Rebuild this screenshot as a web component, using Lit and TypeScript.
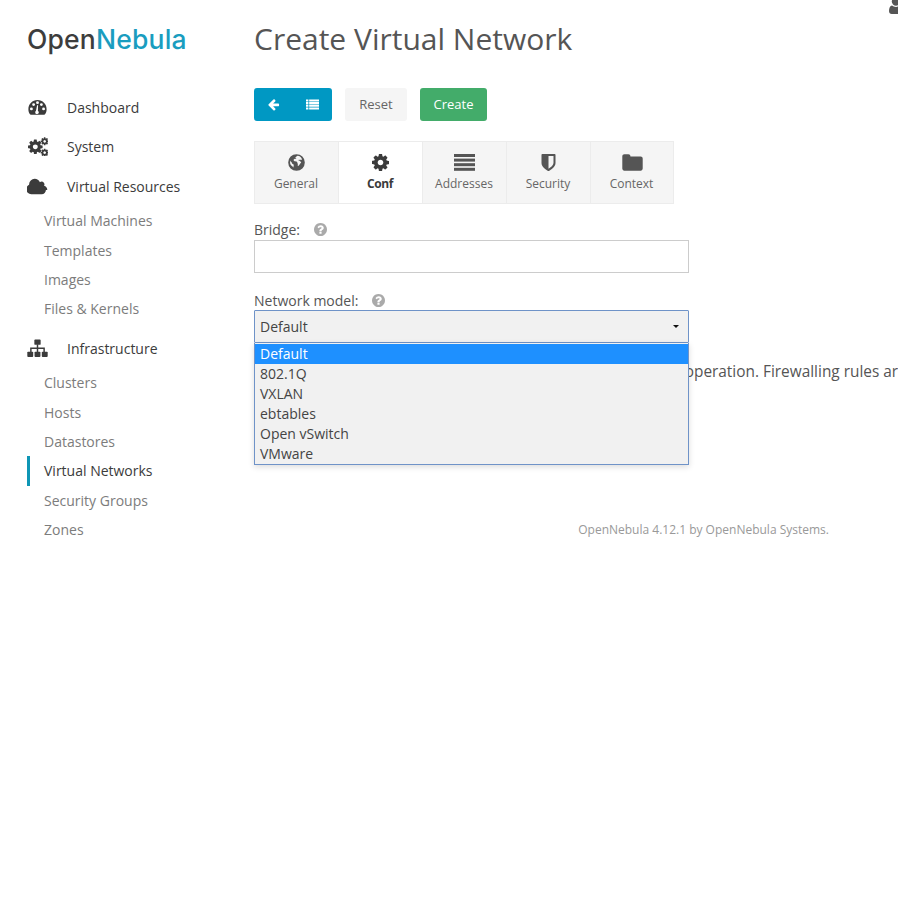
import { LitElement, html, css, svg } from "lit";
import { customElement } from "lit/decorators.js";

const COG = "M1152 896q0-106-75-181t-181-75-181 75-75 181 75 181 181 75 181-75 75-181zm512-109v222q0 12-8 23t-20 13l-185 28q-19 54-39 91 35 50 107 138 10 12 10 25t-9 23q-27 37-99 108t-94 71q-12 0-26-9l-138-108q-44 23-91 38-16 136-29 186-7 28-36 28h-222q-14 0-24.5-8.5t-11.5-21.5l-28-184q-49-16-90-37l-141 107q-10 9-25 9-14 0-25-11-126-114-165-168-7-10-7-23 0-12 8-23 15-21 51-66.5t54-70.5q-27-50-41-99l-183-27q-13-2-21-12.5t-8-23.5v-222q0-12 8-23t19-13l186-28q14-46 39-92-40-57-107-138-10-12-10-24 0-10 9-23 26-36 98.5-107.5t94.5-71.5q13 0 26 10l138 107q44-23 91-38 16-136 29-186 7-28 36-28h222q14 0 24.5 8.5t11.5 21.5l28 184q49 16 90 37l142-107q9-9 24-9 13 0 25 10 129 119 165 170 7 8 7 22 0 12-8 23-15 21-51 66.5t-54 70.5q26 50 41 98l183 28q13 2 21 12.5t8 23.5z";
const CLOUD = "M1728 1216q0 159-112.5 271.5t-271.5 112.5h-960q-185 0-316.5-131.5t-131.5-316.5q0-132 71-241.5t187-163.5q-2-28-2-43 0-212 150-362t362-150q158 0 286.5 88t187.5 230q70-62 166-62 106 0 181 75t75 181q0 75-41 138 129 30 213 134.5t84 239.5z";
const ARROW = "M1664 896v128q0 53-32.5 90.5t-84.5 37.5h-704l293 294q38 36 38 90t-38 90l-75 76q-37 37-90 37-52 0-91-37l-651-652q-37-37-37-90 0-52 37-91l651-650q38-38 91-38 52 0 90 38l75 74q38 38 38 91t-38 91l-293 293h704q52 0 84.5 37.5t32.5 90.5z";
const HELP = "M1024 1376v-192q0-14-9-23t-23-9h-192q-14 0-23 9t-9 23v192q0 14 9 23t23 9h192q14 0 23-9t9-23zm256-672q0-88-55.5-163t-138.5-116-170-41q-243 0-371 213-15 24 8 42l132 100q7 6 19 6 16 0 25-12 53-68 86-92 34-24 86-24 48 0 85.5 26t37.5 59q0 38-20 61t-68 45q-63 28-115.5 86.5t-52.5 125.5v36q0 14 9 23t23 9h192q14 0 23-9t9-23q0-19 21.5-49.5t54.5-49.5q32-18 49-28.5t46-35 44.5-48 28-60.5 12.5-81zm384 192q0 209-103 385.5t-279.5 279.5-385.5 103-385.5-103-279.5-279.5-103-385.5 103-385.5 279.5-279.5 385.5-103 385.5 103 279.5 279.5 103 385.5z";

const icons: Record<string, { box: string; body: unknown }> = {
  dashboard: {
    box: "0 0 20 20",
    body: svg`<path fill-rule="evenodd" d="M10 2.2C4.6 2.2.4 6.5.4 11.8c0 2 .6 3.9 1.7 5.4.2.3.5.4.8.4h14.2c.3 0 .6-.1.8-.4 1.1-1.5 1.7-3.4 1.7-5.4 0-5.3-4.2-9.6-9.6-9.6zM3.6 13a1.5 1.5 0 110-3 1.5 1.5 0 010 3zm2.3-4.6a1.5 1.5 0 110-3 1.5 1.5 0 010 3zM10 6.4a1.5 1.5 0 110-3 1.5 1.5 0 010 3zm1.4 8.6a1.9 1.9 0 11-3-1.5l1.2-6 1 .1-.2 6.1c.6.3 1 .8 1 1.3zm2.7-6.6a1.5 1.5 0 110-3 1.5 1.5 0 010 3zm2.3 4.6a1.5 1.5 0 110-3 1.5 1.5 0 010 3z"/>`,
  },
  gears: {
    box: "0 0 21 19",
    body: svg`
      <g transform="translate(-.2 1.3) scale(.0095)"><path d=${COG}/></g>
      <g transform="translate(13 -.3) scale(.0052)"><path d=${COG}/></g>
      <g transform="translate(13 11) scale(.0052)"><path d=${COG}/></g>`,
  },
  cloud: { box: "0 100 1920 1600", body: svg`<path d=${CLOUD}/>` },
  sitemap: {
    box: "0 0 20 18",
    body: svg`
      <rect x="7" y=".5" width="6" height="5" rx=".8"/>
      <rect x=".3" y="12" width="5.6" height="5" rx=".8"/>
      <rect x="7.2" y="12" width="5.6" height="5" rx=".8"/>
      <rect x="14.1" y="12" width="5.6" height="5" rx=".8"/>
      <path d="M9.3 5h1.4v3h6.3v4.5h-1.4V9.4h-4.9v3.1H9.3V9.4H4.4v3.1H3V8h6.3z"/>`,
  },
  back: { box: "0 0 1792 1792", body: svg`<path d=${ARROW}/>` },
  list: {
    box: "0 0 14 12",
    body: svg`
      <path d="M0 .5h2.6v2.2H0zM0 3.4h2.6v2.2H0zM0 6.3h2.6v2.2H0zM0 9.2h2.6v2.2H0z"/>
      <path d="M3.4.5H14v2.2H3.4zM3.4 3.4H14v2.2H3.4zM3.4 6.3H14v2.2H3.4zM3.4 9.2H14v2.2H3.4z"/>`,
  },
  globe: {
    box: "0 0 18 18",
    body: svg`<path fill-rule="evenodd" d="M9 .2a8.8 8.8 0 100 17.6A8.8 8.8 0 009 .2zM9.6 2c-.5.3-.9.5-1 .9-.2.4-.8.3-.8.8 0 .4.6.4.9.7.2.3-.4.6-.8.7-.6.2-1.700.2-1.900 1-.2.6.3 1.300 1 1.500.9.2 1.800.1 2.400.6.6.5.400 1.200.800 1.800.3.5.3 1.200.1 1.800-.1.400.1 1 .6.8.7-.3 1.400-1.100 1.700-1.900.3-.7 1-1.100 1.300-1.800.2-.5-.4-.5-.7-.8-.3-.4-.2-1-.7-1-.5-.1-.8.3-1.100 0-.3-.3-.1-.9.300-.9.400 0 .700.300 1.100.200.400-.1.500-.500.900-.500.500 0 .900.800 1.200.500-.3-2.500-2.400-4.400-4.800-4.500zM2.500 6.500c-.5 1.600-.4 3.400.3 4.900.3.600.9 1 1.500 1.300.6.300.8 1 1.200 1.400.3.300.5-.2.400-.6-.2-.8.400-1.400.200-2.100-.2-.6-1-.7-1.500-1.100-.5-.4-.4-1.200-.9-1.600-.6-.4-1.200-.9-1.200-1.700z"/>`,
  },
  cog: { box: "128 128 1536 1536", body: svg`<path d=${COG}/>` },
  lines: {
    box: "0 0 21 17",
    body: svg`<rect y="0" width="21" height="3"/><rect y="4.600" width="21" height="3"/><rect y="9.200" width="21" height="3"/><rect y="13.800" width="21" height="3"/>`,
  },
  shield: {
    box: "0 0 14 17",
    body: svg`<path fill-rule="evenodd" d="M.8 0h12.400c.5 0 .8.300.8.800V9c0 3.800-4.600 6.800-6.600 7.900-.3.100-.500.100-.800 0C4.600 15.800 0 12.800 0 9V.8C0 .3.300 0 .8 0zM7 2v12.700c2.300-1.400 5-3.500 5-5.700V2z"/>`,
  },
  folder: {
    box: "0 0 18 15",
    body: svg`<path d="M1.800.3h3.600c1 0 1.800.8 1.800 1.800h9c1 0 1.800.8 1.800 1.800v9c0 1-.8 1.800-1.800 1.800H1.800c-1 0-1.800-.8-1.800-1.800V2.100C0 1.100.8.300 1.800.3z"/>`,
  },
  help: { box: "128 128 1536 1536", body: svg`<path d=${HELP}/>` },
  user: {
    box: "0 0 14 18",
    body: svg`<circle cx="7" cy="4.500" r="4.200"/><path d="M3 8.500c1 .9 2.500 1.400 4 1.400s3-.5 4-1.400c2 .4 3 2.400 3 5.500 0 1.900-1.100 3-2.700 3H2.700C1.100 17 0 15.900 0 14c0-3.100 1-5.100 3-5.500z"/>`,
  },
};

const icon = (name: string) => {
  const i = icons[name];
  return html`<svg viewBox=${i.box} fill="currentColor" aria-hidden="true">${i.body}</svg>`;
};

const MENU = [
  { label: "Dashboard", icon: "dashboard", subs: [] as string[] },
  { label: "System", icon: "gears", subs: [] },
  {
    label: "Virtual Resources",
    icon: "cloud",
    subs: ["Virtual Machines", "Templates", "Images", "Files & Kernels"],
  },
  {
    label: "Infrastructure",
    icon: "sitemap",
    subs: ["Clusters", "Hosts", "Datastores", "Virtual Networks", "Security Groups", "Zones"],
  },
];

const TABS = [
  { label: "General", icon: "globe" },
  { label: "Conf", icon: "cog", active: true },
  { label: "Addresses", icon: "lines" },
  { label: "Security", icon: "shield" },
  { label: "Context", icon: "folder" },
];

const OPTIONS = ["Default", "802.1Q", "VXLAN", "ebtables", "Open vSwitch", "VMware"];

@customElement("app-root")
export class AppRoot extends LitElement {
  static styles = css`
    :host {
      display: block;
      position: relative;
      width: 898px;
      height: 898px;
      overflow: hidden;
      background: #fff;
      color: #555;
      font-family: "Open Sans", sans-serif;
      font-size: 14px;
    }
    svg { display: block; }
    .page {
      display: grid;
      grid-template-columns: 254px 644px;
      align-items: start;
    }
    .side { padding: 23.500px 0 0 27px; }
    .logo {
      font-family: "Inter", sans-serif;
      font-size: 26.500px;
      line-height: 30px;
      font-weight: 500;
      letter-spacing: 0.2px;
      color: #3d3d3d;
      margin-bottom: 34px;
    }
    .logo span { color: #1a9dbf; }
    .top {
      display: flex;
      align-items: center;
      height: 39.500px;
      color: #3b3b3b;
      font-size: 14px;
    }
    .top svg { width: 21px; height: 19px; color: #3b3b3b; }
    .top .ic { width: 40px; }
    .subs { display: flex; flex-direction: column; margin-top: 0.300px; margin-bottom: 5.200px; }
    .sub {
      height: 29.300px;
      line-height: 29.300px;
      color: #7c7c7c;
      font-size: 14px;
      border-left: 3px solid transparent;
      padding-left: 14px;
    }
    .sub.on { color: #3b3b3b; border-left-color: #0e96b5; }

    h1 {
      margin: 0;
      padding-top: 17px;
      font-size: 30px;
      line-height: 44px;
      font-weight: 400;
      color: #555;
    }
    .actions { display: flex; margin-top: 27px; height: 33px; gap: 13px; }
    .group {
      display: flex;
      width: 78px;
      background: #0098c3;
      border-radius: 3px;
      color: #fff;
    }
    .group div { flex: 1; display: flex; align-items: center; justify-content: center; }
    .group svg { width: 13px; height: 13px; }
    .btn {
      display: flex;
      align-items: center;
      justify-content: center;
      border-radius: 3px;
      font-size: 13px;
      padding-bottom: 1px;
      box-sizing: border-box;
    }
    .reset { width: 62px; background: #f5f5f5; color: #666; }
    .create { width: 67px; background: #43ac6a; color: #fff; }
    .tabs {
      display: flex;
      margin-top: 20px;
      width: 420px;
      height: 63px;
      box-sizing: border-box;
      border-top: 1px solid #ececec;
      border-bottom: 1px solid #ececec;
      background: #f5f5f5;
    }
    .tab {
      width: 84px;
      box-sizing: border-box;
      display: flex;
      flex-direction: column;
      align-items: center;
      padding-top: 11px;
      font-size: 12px;
      color: #666;
      border-left: 1px solid #ececec;
    }
    .tab:last-child { border-right: 1px solid #ececec; }
    .tab .i { height: 19px; display: flex; align-items: center; justify-content: center; color: #555; }
    .tab .i svg { height: 17px; width: 21px; }
    .tab .t { margin: 3px 1px 0 0; line-height: 18px; }
    .tab.on { background: #fff; color: #3b3b3b; font-weight: 700; letter-spacing: -0.4px; }
    .tab.on .i { color: #3b3b3b; }
    .field { width: 435px; }
    .lab {
      display: flex;
      align-items: center;
      gap: 14px;
      height: 20px;
      font-size: 14px;
      color: #555;
    }
    .lab svg { width: 13px; height: 13px; color: #aaa; }
    .f1 { margin-top: 15px; }
    .input {
      margin-top: 1px;
      height: 33px;
      box-sizing: border-box;
      border: 1px solid #ccc;
    }
    .f2 { margin-top: 17px; position: relative; }
    .select {
      height: 33px;
      box-sizing: border-box;
      border: 1px solid #6f93c8;
      border-radius: 1px;
      background: #f1f1f1;
      display: flex;
      align-items: center;
      justify-content: space-between;
      padding: 0 9px 0 5px;
      font-size: 14px;
      color: #444;
    }
    .caret {
      width: 0;
      height: 0;
      border-left: 3px solid transparent;
      border-right: 3px solid transparent;
      border-top: 3px solid #111;
    }
    .list {
      position: absolute;
      left: 0;
      right: 0;
      top: 53px;
      box-sizing: border-box;
      height: 122px;
      border: 1px solid #6f93c8;
      border-top: 0;
      background: #f1f1f1;
      box-shadow: 0 2px 6px rgba(0, 0, 0, 0.14);
      z-index: 2;
      padding-top: 1px;
      font-size: 14px;
      color: #444;
    }
    .opt { height: 20px; line-height: 20px; padding-left: 5px; }
    .opt.on { background: #1e90ff; color: #fff; }
    .tip {
      margin: 18px 0 0 19px;
      white-space: nowrap;
      font-size: 15.400px;
      line-height: 22px;
      color: #555;
    }
    .foot {
      margin-top: 138px;
      width: 575px;
      text-align: right;
      font-size: 12px;
      line-height: 18px;
      color: #999;
    }
    .user {
      position: absolute;
      left: 889px;
      top: -3px;
      width: 14px;
      height: 18px;
      color: #555;
    }
    .user svg { width: 14px; height: 18px; }
  `;

  render() {
    return html`
      <div class="page">
        <nav class="side">
          <div class="logo">Open<span>Nebula</span></div>
          ${MENU.map(
            (m) => html`
              <div class="top"><div class="ic">${icon(m.icon)}</div>${m.label}</div>
              ${m.subs.length
                ? html`<div class="subs">
                    ${m.subs.map(
                      (s) => html`<div class="sub ${s === "Virtual Networks" ? "on" : ""}">${s}</div>`
                    )}
                  </div>`
                : ""}
            `
          )}
        </nav>
        <main>
          <h1>Create Virtual Network</h1>
          <div class="actions">
            <div class="group"><div>${icon("back")}</div><div>${icon("list")}</div></div>
            <div class="btn reset">Reset</div>
            <div class="btn create">Create</div>
          </div>
          <div class="tabs">
            ${TABS.map(
              (t) => html`<div class="tab ${t.active ? "on" : ""}">
                <div class="i">${icon(t.icon)}</div>
                <div class="t">${t.label}</div>
              </div>`
            )}
          </div>
          <div class="field f1">
            <div class="lab">Bridge: ${icon("help")}</div>
            <div class="input"></div>
          </div>
          <div class="field f2">
            <div class="lab">Network model: ${icon("help")}</div>
            <div class="select">Default<span class="caret"></span></div>
            <div class="list">
              ${OPTIONS.map((o, i) => html`<div class="opt ${i === 0 ? "on" : ""}">${o}</div>`)}
            </div>
          </div>
          <p class="tip">Default: dummy driver that doesn't perform any network operation. Firewalling rules are also ignored.</p>
          <div class="foot">OpenNebula 4.12.1 by OpenNebula Systems.</div>
        </main>
      </div>
      <div class="user">${icon("user")}</div>
    `;
  }
}
